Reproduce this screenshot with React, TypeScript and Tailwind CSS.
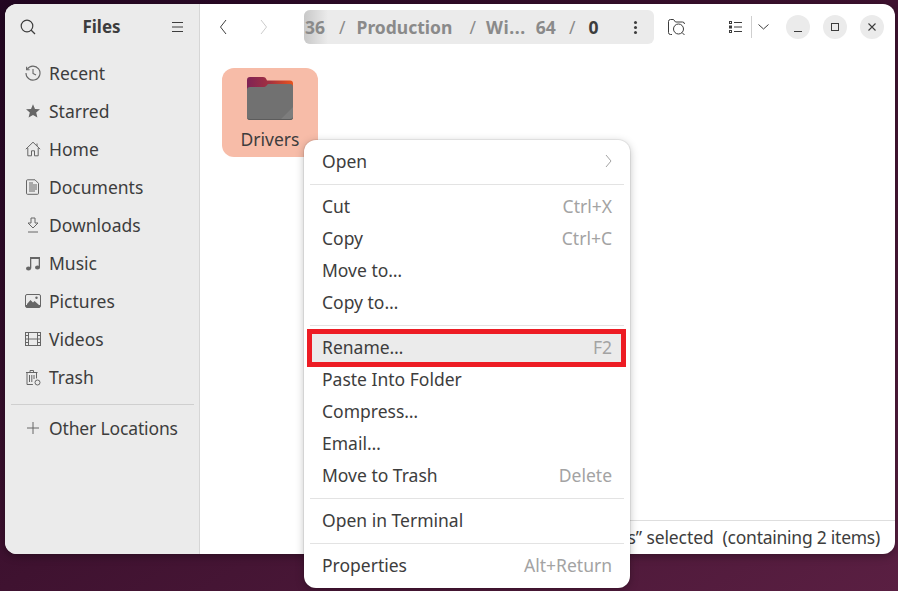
const sans = '[font-family:"Noto_Sans",sans-serif]';

function Recent() {
  return (
    <svg width="16" height="16" viewBox="0 0 16 16" fill="none" stroke="currentColor" strokeWidth="1.1">
      <path d="M2.200 4.200A7 7 0 1 1 1 8" />
      <path d="M1.600 1.800v3h3" />
      <path d="M8 4v4.400l3 1.600" />
    </svg>
  );
}

function Star() {
  return (
    <svg width="16" height="16" viewBox="0 0 16 16" fill="currentColor">
      <path d="M8 1.200l2 4.700 5 .4-3.800 3.300 1.200 5L8 12l-4.400 2.600 1.200-5L1 6.300l5-.4z" />
    </svg>
  );
}

function Home() {
  return (
    <svg width="16" height="16" viewBox="0 0 16 16" fill="none" stroke="currentColor" strokeWidth="1">
      <path d="M.8 8.200 8 1.200l7.200 7" />
      <path d="M2.800 7v7.800h3.700v-5h3v5h3.700V7" />
      <path d="M12 2.500v2.500" />
    </svg>
  );
}

function Documents() {
  return (
    <svg width="16" height="16" viewBox="0 0 16 16" fill="none" stroke="currentColor" strokeWidth="1">
      <path d="M2.500.8h7.500l3.500 3.500v10a1 1 0 0 1-1 1h-10a1 1 0 0 1-1-1v-12.500a1 1 0 0 1 1-1z" />
      <path d="M4 6h8M4 8h8M4 10h8M4 12h6M4 4h4" />
    </svg>
  );
}

function Downloads() {
  return (
    <svg width="16" height="16" viewBox="0 0 16 16" fill="none" stroke="currentColor" strokeWidth="1">
      <path d="M6 1h4v5h3l-5 5-5-5h3z" />
      <path d="M3 15h10" />
    </svg>
  );
}

function Music() {
  return (
    <svg width="16" height="16" viewBox="0 0 16 16" fill="currentColor">
      <path d="M5 2h10v10.500h-1.300V4H6.300v9.500H5z" />
      <ellipse cx="3.500" cy="13.500" rx="2.500" ry="2" />
      <ellipse cx="12.500" cy="12.500" rx="2.500" ry="2" />
    </svg>
  );
}

function Pictures() {
  return (
    <svg width="16" height="14" viewBox="0 0 16 14" fill="none">
      <rect x=".5" y=".5" width="15" height="13" rx="1.500" stroke="currentColor" />
      <path d="M2 12V10l3.500-4 2.500 2.500 1.500-1.500L14 11v1z" fill="currentColor" />
      <rect x="1" y="11" width="14" height="2.300" fill="currentColor" />
      <circle cx="11.500" cy="3.800" r="1.200" fill="currentColor" />
    </svg>
  );
}

function Videos() {
  return (
    <svg width="16" height="14" viewBox="0 0 16 14" fill="none" stroke="currentColor" strokeWidth="1">
      <rect x=".5" y=".5" width="15" height="13" />
      <path d="M3.500.5v13M12.500.5v13M3.500 7h9M.5 3.500h3M.5 7h3M.5 10.500h3M12.500 3.500h3M12.500 7h3M12.500 10.500h3" />
    </svg>
  );
}

function Trash() {
  return (
    <svg width="16" height="17" viewBox="0 0 16 17" fill="none" stroke="currentColor" strokeWidth="1">
      <path d="M1 3.500h11.500M5 3V1.500h3.500V3" />
      <path d="M2 4v11.500h5.500M11.500 4v5" strokeLinecap="round" />
      <path d="M4.500 6v7M6.800 6v7M9 6v4" />
      <circle cx="12.500" cy="13.500" r="2.500" />
    </svg>
  );
}

function Plus() {
  return (
    <svg width="12" height="12" viewBox="0 0 12 12" stroke="currentColor" strokeWidth="1">
      <path d="M6 0v12M0 6h12" />
    </svg>
  );
}

const places = [
  { name: 'Recent', icon: <Recent /> },
  { name: 'Starred', icon: <Star /> },
  { name: 'Home', icon: <Home /> },
  { name: 'Documents', icon: <Documents /> },
  { name: 'Downloads', icon: <Downloads /> },
  { name: 'Music', icon: <Music /> },
  { name: 'Pictures', icon: <Pictures /> },
  { name: 'Videos', icon: <Videos /> },
  { name: 'Trash', icon: <Trash /> },
];

function Sidebar() {
  return (
    <aside className="w-[195px] shrink-0 bg-[#ebebeb] border-r border-[#d6d6d6] flex flex-col">
      {/* Header */}
      <div className="h-[46px] flex items-center justify-between pl-[15px] pr-[15px] text-[#3d3d3d]">
        <svg width="16" height="16" viewBox="0 0 16 16" fill="none" stroke="currentColor" strokeWidth="1.2">
          <circle cx="7" cy="7" r="5.800" />
          <path d="M11 11l4 4" />
        </svg>
        <span className="mr-[4px] text-[17px] font-bold">Files</span>
        <svg width="13" height="10" viewBox="0 0 13 10" stroke="currentColor" strokeWidth="1">
          <path d="M1 .5h11M1 5h11M1 9.500h11" />
        </svg>
      </div>

      {/* Places */}
      <nav className="pt-[4px] flex flex-col">
        {places.map(place => (
          <div key={place.name} className="h-[38px] flex items-center text-[#3d3d3d] text-[17.500px]">
            <span className="w-[44px] pl-[14px] pr-[3px] flex justify-center text-[#666666]">{place.icon}</span>
            <span>{place.name}</span>
          </div>
        ))}
      </nav>

      <div className="mt-[8px] ml-[6px] mr-[5px] h-px bg-[#cfcfcf]" />

      <div className="mt-[4px] h-[38px] flex items-center text-[#3d3d3d] text-[17.500px]">
        <span className="w-[44px] pl-[14px] pr-[3px] flex justify-center text-[#666666]"><Plus /></span>
        <span className="tracking-[-0.15px]">Other Locations</span>
      </div>
    </aside>
  );
}

function PathBar() {
  return (
    <div className="relative ml-[36px] w-[350px] h-[34px] rounded-[6px] bg-[#ebebeb] flex items-center font-bold text-[17.500px] text-[#8a8a8a] overflow-hidden">
      <div className="absolute left-0 top-0 bottom-0 w-[24px] bg-gradient-to-r from-[#c8c8c8] to-transparent" />
      <span className="ml-px w-[21px] relative">36</span>
      <span className="ml-[13px] font-normal">/</span>
      <span className="ml-[11px]">Production</span>
      <span className="ml-[17px] font-normal">/</span>
      <span className="ml-[10px] tracking-[0.6px]">Wi...</span>
      <span className="ml-[10px]">64</span>
      <span className="ml-[13px] font-normal">/</span>
      <span className="ml-[13px] text-[#3d3d3d]">0</span>
      <span className="absolute right-[17px] top-[11px] flex flex-col gap-[2px]">
        <span className="w-[3px] h-[3px] rounded-full bg-[#3d3d3d]" />
        <span className="w-[3px] h-[3px] rounded-full bg-[#3d3d3d]" />
        <span className="w-[3px] h-[3px] rounded-full bg-[#3d3d3d]" />
      </span>
    </div>
  );
}

function Toolbar() {
  return (
    <header className="h-[46px] flex items-center text-[#3d3d3d]">
      <svg className="ml-[19px]" width="8" height="16" viewBox="0 0 8 16" fill="none" stroke="#3d3d3d">
        <path d="M7 1 1.500 8 7 15" />
      </svg>
      <svg className="ml-[33px]" width="8" height="16" viewBox="0 0 8 16" fill="none" stroke="#cccccc">
        <path d="M1 1l5.500 7L1 15" />
      </svg>
      <PathBar />
      <svg className="ml-[14px]" width="18" height="17" viewBox="0 0 18 17" fill="none" stroke="currentColor" strokeWidth="1">
        <path d="M4 15.500H2.500a2 2 0 0 1-2-2v-11a2 2 0 0 1 2-2h3l2 2.500h7a2 2 0 0 1 2 2" />
        <circle cx="10.500" cy="10" r="5" />
        <path d="M14 13.500l2.500 2.500" />
      </svg>
      <svg className="ml-[43px]" width="13" height="12" viewBox="0 0 13 12" fill="none" stroke="currentColor" strokeWidth="1">
        <path d="M5 1.500h8M5 6h8M5 10.500h8" />
        <rect x=".5" y=".5" width="2" height="2" />
        <rect x=".5" y="5" width="2" height="2" />
        <rect x=".5" y="9.500" width="2" height="2" />
      </svg>
      <div className="ml-[9px] w-px h-[22px] bg-[#cfcfcf]" />
      <svg className="ml-[6px]" width="11" height="6" viewBox="0 0 11 6" fill="none" stroke="currentColor">
        <path d="M.5.500l5 4.500 5-4.500" />
      </svg>
      <div className="ml-[17px] w-[24px] h-[24px] rounded-full bg-[#ebebeb] flex items-center justify-center">
        <span className="mt-[9px] w-[8px] h-px bg-[#3d3d3d]" />
      </div>
      <div className="ml-[13px] w-[24px] h-[24px] rounded-full bg-[#ebebeb] flex items-center justify-center">
        <span className="w-[8px] h-[8px] border border-[#3d3d3d]" />
      </div>
      <div className="ml-[13px] w-[24px] h-[24px] rounded-full bg-[#ebebeb] flex items-center justify-center">
        <svg width="8" height="8" viewBox="0 0 8 8" stroke="#3d3d3d" strokeWidth="1.100">
          <path d="M.5.500l7 7M7.500.500l-7 7" />
        </svg>
      </div>
    </header>
  );
}

function FolderIcon() {
  return (
    <svg width="46" height="43" viewBox="0 0 46 43">
      <defs>
        <linearGradient id="folderBack" x1="0" y1="0" x2="1" y2="0">
          <stop offset="0" stopColor="#7f2355" />
          <stop offset="0.5" stopColor="#a33140" />
          <stop offset="1" stopColor="#e9541e" />
        </linearGradient>
      </defs>
      <path d="M3 0h13c2 0 3 1 4 3.500h23a3 3 0 0 1 3 3v12H0V3a3 3 0 0 1 3-3z" fill="url(#folderBack)" />
      <path d="M3 10h13c2 0 3-.5 4-2 .5-1 1-1 2-1h21a3 3 0 0 1 3 3v30a3 3 0 0 1-3 3H3a3 3 0 0 1-3-3V13a3 3 0 0 1 3-3z" fill="#717171" />
      <path d="M46 30v10a3 3 0 0 1-3 3H33z" fill="#7d7d7d" />
      <path d="M0 39v1a3 3 0 0 0 3 3h40a3 3 0 0 0 3-3v-1a3 3 0 0 1-3 3H3a3 3 0 0 1-3-3z" fill="#5c5c5c" />
    </svg>
  );
}

function MenuItem({ label, shortcut, chevron }: { label: string; shortcut?: string; chevron?: boolean }) {
  return (
    <div className="h-[32px] mx-[6px] px-[12px] flex items-center justify-between text-[17.500px] text-[#3d3d3d]">
      <span>{label}</span>
      {shortcut && <span className="text-[#a3a3a3]">{shortcut}</span>}
      {chevron && (
        <svg width="7" height="14" viewBox="0 0 7 14" fill="none" stroke="#a3a3a3">
          <path d="M1 1l5 6-5 6" />
        </svg>
      )}
    </div>
  );
}

function Separator() {
  return <div className="mt-[7px] mb-[5px] mx-[6px] h-px bg-[#e3e3e3]" />;
}

function ContextMenu() {
  return (
    <div className="absolute left-[304px] top-[140px] w-[326px] h-[448px] bg-white rounded-[12px] pt-[5px] shadow-[0_2px_8px_rgba(0,0,0,0.25),0_0_0_1px_rgba(0,0,0,0.06)]">
      <MenuItem label="Open" chevron />
      <Separator />
      <MenuItem label="Cut" shortcut="Ctrl+X" />
      <MenuItem label="Copy" shortcut="Ctrl+C" />
      <MenuItem label="Move to…" />
      <MenuItem label="Copy to…" />
      <Separator />
      <div className="relative">
        <div className="absolute left-[3px] right-[4px] -top-[2px] -bottom-[4px] border-[5px] border-[#ed1c24] bg-[#ebebeb]" />
        <div className="relative">
          <MenuItem label="Rename…" shortcut="F2" />
        </div>
      </div>
      <MenuItem label="Paste Into Folder" />
      <MenuItem label="Compress…" />
      <MenuItem label="Email…" />
      <MenuItem label="Move to Trash" shortcut="Delete" />
      <Separator />
      <MenuItem label="Open in Terminal" />
      <Separator />
      <MenuItem label="Properties" shortcut="Alt+Return" />
    </div>
  );
}

export default function App() {
  return (
    <div className={`relative w-[898px] h-[591px] overflow-hidden pt-[4px] pl-[5px] bg-gradient-to-br from-[#230622] via-[#3f1230] to-[#5a1f42] ${sans}`}>
      <div className="w-[890px] h-[550px] rounded-[12px] overflow-hidden bg-white flex shadow-[0_2px_8px_rgba(0,0,0,0.35)]">
        <Sidebar />
        <main className="flex-1 flex flex-col">
          <Toolbar />
          <div className="flex-1 pt-[18px] pl-[22px]">
            <div className="w-[96px] h-[89px] rounded-[12px] bg-[#f7bca8] pt-[9px] flex flex-col items-center">
              <FolderIcon />
              <span className="mt-[6px] text-[17.500px] leading-[26px] text-[#3d3d3d]">Drivers</span>
            </div>
          </div>
          {/* Floating status label, only as wide as its text */}
          <footer className="h-[34px] flex justify-end">
            <div className="h-full border-t border-[#dedede] flex items-center gap-[9px] pl-[12px] pr-[15px] text-[17.500px] text-[#3d3d3d]">
              <span className="tracking-[-0.1px]">“Drivers” selected</span>
              <span className="tracking-[-0.25px]">(containing 2 items)</span>
            </div>
          </footer>
        </main>
      </div>
      <ContextMenu />
    </div>
  );
}
